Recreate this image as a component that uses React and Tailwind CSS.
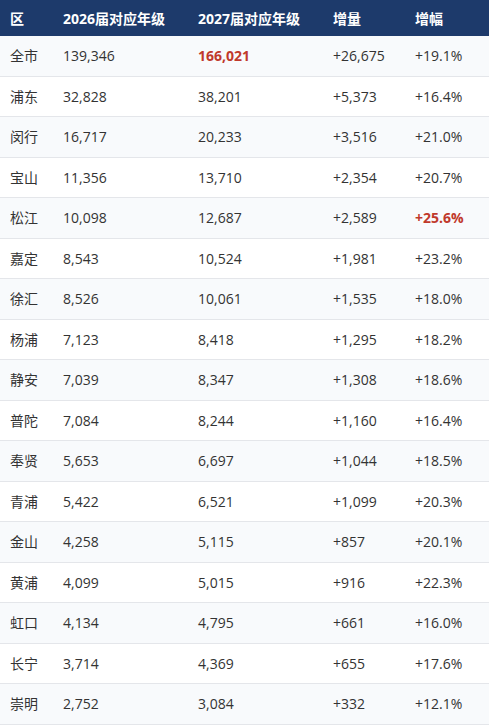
import React from 'react'

const rows = [
  ['全市', '139,346', '166,021', '+26,675', '+19.1%'],
  ['浦东', '32,828', '38,201', '+5,373', '+16.4%'],
  ['闵行', '16,717', '20,233', '+3,516', '+21.0%'],
  ['宝山', '11,356', '13,710', '+2,354', '+20.7%'],
  ['松江', '10,098', '12,687', '+2,589', '+25.6%'],
  ['嘉定', '8,543', '10,524', '+1,981', '+23.2%'],
  ['徐汇', '8,526', '10,061', '+1,535', '+18.0%'],
  ['杨浦', '7,123', '8,418', '+1,295', '+18.2%'],
  ['静安', '7,039', '8,347', '+1,308', '+18.6%'],
  ['普陀', '7,084', '8,244', '+1,160', '+16.4%'],
  ['奉贤', '5,653', '6,697', '+1,044', '+18.5%'],
  ['青浦', '5,422', '6,521', '+1,099', '+20.3%'],
  ['金山', '4,258', '5,115', '+857', '+20.1%'],
  ['黄浦', '4,099', '5,015', '+916', '+22.3%'],
  ['虹口', '4,134', '4,795', '+661', '+16.0%'],
  ['长宁', '3,714', '4,369', '+655', '+17.6%'],
  ['崇明', '2,752', '3,084', '+332', '+12.1%'],
]

const cols = 'grid grid-cols-[53px_135px_135px_82px_1fr]'

export default function App() {
  return (
    <div className="w-[489px] h-[725px] overflow-hidden bg-white text-[14px] text-[#333333] font-['Open_Sans','Noto_Sans','Noto_Sans_CJK_SC',sans-serif]">
      <div className={`${cols} h-[36px] items-center bg-[#1d3a6b] text-white font-bold`}>
        <div className="pl-[10px]">区</div>
        <div className="pl-[10px]">2026届对应年级</div>
        <div className="pl-[10px]">2027届对应年级</div>
        <div className="pl-[10px]">增量</div>
        <div className="pl-[10px]">增幅</div>
      </div>
      {rows.map((r, i) => (
        <div
          key={r[0]}
          className={`${cols} h-[40.5px] items-center border-b border-[#e4e6ea] ${i % 2 === 0 ? 'bg-[#f8fafc]' : 'bg-white'}`}
        >
          <div className="pl-[10px]">{r[0]}</div>
          <div className="pl-[10px]">{r[1]}</div>
          <div className={`pl-[10px] ${i === 0 ? 'font-bold text-[#c0392b]' : ''}`}>{r[2]}</div>
          <div className="pl-[10px]">{r[3]}</div>
          <div className={`pl-[10px] ${i === 4 ? 'font-bold text-[#c0392b]' : ''}`}>{r[4]}</div>
        </div>
      ))}
    </div>
  )
}
